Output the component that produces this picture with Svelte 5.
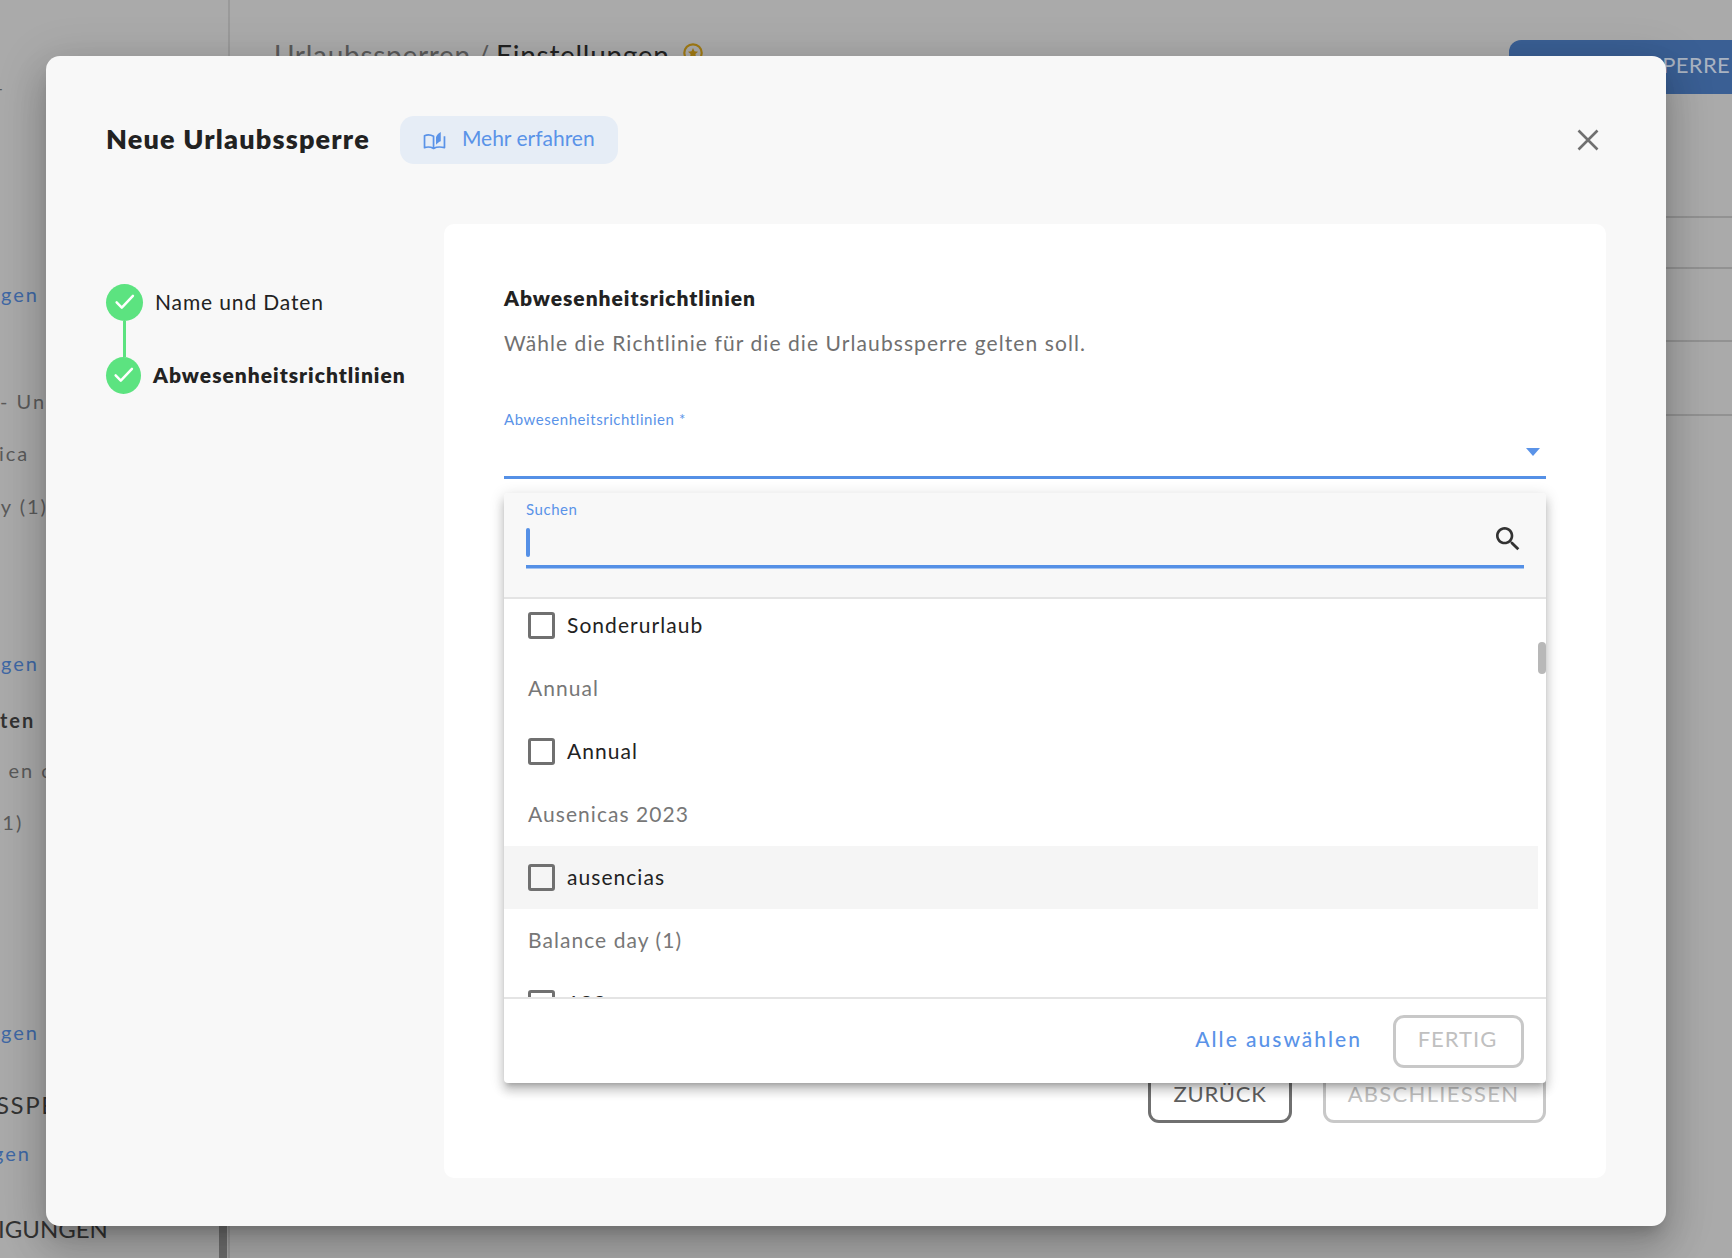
<script>
  const sideItems = [
    { text: '–', gap: 75, left: -8, kind: '' },
    { text: 'gen', gap: 183, left: 1, kind: 'link' },
    { text: '- Un', gap: 83, left: 0, kind: '' },
    { text: 'ica', gap: 28, left: -1, kind: '' },
    { text: 'ay (1)', gap: 29, left: -11, kind: '' },
    { text: 'gen', gap: 133, left: 1, kind: 'link' },
    { text: 'ten', gap: 33, left: 0, kind: 'bold' },
    { text: 'o en curso', gap: 26, left: -12, kind: '' },
    { text: '(1)', gap: 28, left: -5, kind: '' },
    { text: 'e', gap: 81, left: -12, kind: '' },
    { text: 'gen', gap: 81, left: 1, kind: 'link' },
    { text: 'SSPERREN', gap: 49, left: -4, kind: 'caps' },
    { text: 'gen', gap: 24, left: -7, kind: 'link' },
    { text: 'IGUNGEN', gap: 52, left: -2, kind: 'caps tight' }
  ];
  const rows = [
    { text: 'Sonderurlaub', check: true },
    { text: 'Annual', check: false },
    { text: 'Annual', check: true },
    { text: 'Ausenicas 2023', check: false },
    { text: 'ausencias', check: true, hover: true },
    { text: 'Balance day (1)', check: false },
    { text: '123', check: true }
  ];
  const steps = [
    { text: 'Name und Daten', active: false },
    { text: 'Abwesenheitsrichtlinien', active: true }
  ];
</script>

<div class="page">
  <aside class="side">
    {#each sideItems as item}
      <div class="side-item {item.kind}" style:margin-top="{item.gap}px" style:margin-left="{item.left}px">{item.text}</div>
    {/each}
    <div class="side-scroll"></div>
  </aside>

  <main class="main">
    <header class="top">
      <h1 class="crumb">Urlaubssperren / <span>Einstellungen</span></h1>
      <svg class="star" viewBox="0 0 24 24" aria-hidden="true">
        <circle cx="12" cy="12" r="9.500" fill="none" stroke="#a07a14" stroke-width="2.400" />
        <path d="M12 6.600l1.600 3.600 3.900.4-2.900 2.600.8 3.800-3.400-2-3.400 2 .8-3.800-2.900-2.600 3.900-.4z" fill="#a07a14" />
      </svg>
      <div class="new-btn">NEUE URLAUBSSPERRE</div>
    </header>
    <div class="bg-row r1"></div>
    <div class="bg-row r2"></div>
    <div class="bg-row r3"></div>
    <div class="bg-row r4"></div>
  </main>

  <div class="modal">
    <div class="modal-head">
      <h2 class="modal-title">Neue Urlaubssperre</h2>
      <div class="learn">
        <svg class="book" viewBox="0 0 24 20" aria-hidden="true">
          <path d="M1.500 5v12.500c3-1 6-1 9.500.8V5.600C8 3.800 4.500 3.500 1.500 5z" fill="none" stroke="currentColor" stroke-width="1.800" stroke-linejoin="round" />
          <path d="M11 18.300c3.500-1.800 7.500-1.800 11.500-.8V5.500" fill="none" stroke="currentColor" stroke-width="1.800" stroke-linejoin="round" />
          <path d="M13.600 14.500V6.200C14.600 4 16.400 2 18.600 1v9.800c-2 .7-3.700 2-5 3.700z" fill="currentColor" />
        </svg>
        <span>Mehr erfahren</span>
      </div>
      <svg class="close" viewBox="0 0 22 22" aria-hidden="true">
        <path d="M1.500 1.500l19 19M20.500 1.500l-19 19" fill="none" stroke="#707070" stroke-width="2.600" />
      </svg>
    </div>

    <div class="modal-body">
      <nav class="stepper">
        {#each steps as step, i}
          {#if i > 0}<div class="connector"></div>{/if}
          <div class="step" class:active={step.active}>
            <span class="dot">
              <svg viewBox="0 0 24 24" aria-hidden="true">
                <path d="M5 12.800l4.600 4.700L19.500 7" fill="none" stroke="#fff" stroke-width="2.200" stroke-linecap="round" stroke-linejoin="round" />
              </svg>
            </span>
            <span class="step-text">{step.text}</span>
          </div>
        {/each}
      </nav>

      <section class="card">
        <h3 class="card-title">Abwesenheitsrichtlinien</h3>
        <p class="card-sub">Wähle die Richtlinie für die die Urlaubssperre gelten soll.</p>
        <div class="field-label">Abwesenheitsrichtlinien *</div>
        <div class="select"><span class="arrow"></span></div>

        <div class="actions">
          <div class="btn back">ZURÜCK</div>
          <div class="btn off finish">ABSCHLIESSEN</div>
        </div>

        <div class="panel">
          <div class="panel-head">
            <div class="search-label">Suchen</div>
            <div class="search-input">
              <span class="caret"></span>
              <svg class="search" viewBox="0 0 24 24" aria-hidden="true">
                <path fill="#333" d="M15.500 14h-.79l-.28-.27C15.410 12.590 16 11.110 16 9.500 16 5.910 13.090 3 9.500 3S3 5.910 3 9.500 5.910 16 9.500 16c1.610 0 3.090-.59 4.230-1.570l.27.28v.79l5 4.990L20.490 19l-4.990-5zm-6 0C7.010 14 5 11.990 5 9.500S7.010 5 9.500 5 14 7.010 14 9.500 11.990 14 9.500 14z" />
              </svg>
            </div>
          </div>
          <div class="list">
            <div class="rows">
              {#each rows as row}
                {#if row.check}
                  <div class="row" class:hover={row.hover}><span class="box"></span><span class="row-text">{row.text}</span></div>
                {:else}
                  <div class="row group">{row.text}</div>
                {/if}
              {/each}
            </div>
            <div class="thumb"></div>
          </div>
          <div class="panel-foot">
            <span class="all">Alle auswählen</span>
            <div class="btn off done">FERTIG</div>
          </div>
        </div>
      </section>
    </div>
  </div>
</div>

<style>
  :global(body) {
    margin: 0;
    background: #aaa;
    font-family: "Lato", "Noto Sans", sans-serif;
  }
  h1, h2, h3, p { margin: 0; font-weight: inherit; font-size: inherit; }

  .page {
    position: relative;
    display: flex;
    width: 1732px;
    height: 1258px;
    overflow: hidden;
    background: #aaa;
    color: #222;
  }

  .side {
    position: relative;
    flex: none;
    box-sizing: border-box;
    width: 230px;
    overflow: hidden;
    border-right: 2px solid #9a9a9a;
  }
  .side-item {
    height: 24px;
    line-height: 24px;
    font-size: 20px;
    letter-spacing: 2px;
    white-space: nowrap;
    color: #5a5a5a;
  }
  .side-item.link { color: #3f68a5; }
  .side-item.bold { color: #333; font-weight: 700; }
  .side-item.caps { color: #333; font-size: 24px; letter-spacing: 1.600px; }
  .side-item.tight { letter-spacing: 0; }
  .side-scroll {
    position: absolute;
    right: 1px;
    bottom: 0;
    width: 8px;
    height: 60px;
    background: #6e6e6e;
  }

  .main { flex: 1; min-width: 0; }
  .top {
    display: flex;
    align-items: flex-start;
    height: 216px;
    box-sizing: border-box;
    padding: 40px 0 0 44px;
  }
  .crumb {
    font-size: 28px;
    line-height: 30px;
    color: #5a5a5a;
    letter-spacing: .7px;
    word-spacing: -2px;
  }
  .crumb span { color: #222; }
  .star { width: 22px; height: 22px; margin: 2px 0 0 12px; }
  .new-btn {
    margin-left: auto;
    width: 223px;
    height: 54px;
    box-sizing: border-box;
    padding: 0 2px 4px 0;
    border-radius: 12px 0 0 12px;
    background: #3a5f94;
    color: #aab4c2;
    font-size: 22px;
    line-height: 50px;
    letter-spacing: .3px;
    text-align: right;
    white-space: nowrap;
    direction: rtl;
    overflow: hidden;
  }
  .bg-row { border-top: 2px solid #929292; }
  .r1 { height: 49px; }
  .r2 { height: 71px; }
  .r3 { height: 72px; }

  .modal {
    position: absolute;
    left: 46px;
    top: 56px;
    width: 1620px;
    height: 1170px;
    display: flex;
    flex-direction: column;
    border-radius: 14px;
    background: #f8f8f8;
    box-shadow: 0 11px 15px -7px rgba(0,0,0,.2), 0 24px 38px 3px rgba(0,0,0,.14), 0 9px 46px 8px rgba(0,0,0,.12);
  }
  .modal-head {
    display: flex;
    align-items: center;
    height: 48px;
    margin-top: 60px;
    padding: 0 67px 0 60px;
  }
  .modal-title {
    padding-bottom: 3px;
    font-size: 27px;
    font-weight: 800;
    letter-spacing: 1.200px;
    color: #222;
    white-space: nowrap;
  }
  .learn {
    display: flex;
    align-items: center;
    gap: 16px;
    height: 48px;
    margin-left: 30px;
    padding: 0 23px;
    border-radius: 14px;
    background: #e6edf6;
    color: #5a93e8;
    font-size: 21px;
    white-space: nowrap;
  }
  .learn span { padding-bottom: 5px; }
  .book { width: 23px; height: 19px; }
  .close { width: 22px; height: 22px; margin-left: auto; }

  .modal-body {
    display: flex;
    flex: 1;
    min-height: 0;
    margin: 60px 60px 48px 60px;
  }
  .stepper {
    flex: none;
    width: 338px;
    padding-top: 60px;
    box-sizing: border-box;
  }
  .step { display: flex; align-items: center; gap: 12px; height: 37px; }
  .dot {
    display: flex;
    align-items: center;
    justify-content: center;
    flex: none;
    width: 37px;
    height: 37px;
    border-radius: 50%;
    background: #5ce380;
  }
  .dot svg { width: 27px; height: 27px; margin-top: -2px; }
  .step.active .dot { width: 35px; }
  .step-text {
    padding-bottom: 2px;
    font-size: 21px;
    letter-spacing: .87px;
    color: #222;
    white-space: nowrap;
  }
  .step.active .step-text { font-weight: 800; letter-spacing: 1px; }
  .connector { width: 3px; height: 36px; margin-left: 17px; background: #5ce380; }

  .card {
    position: relative;
    flex: 1;
    display: flex;
    flex-direction: column;
    box-sizing: border-box;
    padding: 60px 60px 55px;
    border-radius: 10px;
    background: #fff;
  }
  .card-title {
    font-size: 21px;
    line-height: 28px;
    font-weight: 800;
    letter-spacing: .97px;
    color: #222;
  }
  .card-sub {
    margin-top: 17px;
    font-size: 21px;
    line-height: 28px;
    letter-spacing: 1.080px;
    color: #707070;
  }
  .field-label {
    margin-top: 52px;
    font-size: 15px;
    line-height: 20px;
    color: #5a93e8;
    letter-spacing: .55px;
  }
  .select {
    display: flex;
    justify-content: flex-end;
    align-items: center;
    box-sizing: border-box;
    height: 50px;
    padding: 0 6px 2px 0;
    border-bottom: 3px solid #5590e6;
  }
  .arrow {
    width: 0;
    height: 0;
    border-left: 7px solid transparent;
    border-right: 7px solid transparent;
    border-top: 8px solid #5a93e8;
  }
  .actions {
    display: flex;
    justify-content: flex-end;
    gap: 31px;
    margin-top: auto;
  }
  .btn {
    display: flex;
    align-items: center;
    justify-content: center;
    box-sizing: border-box;
    height: 54px;
    padding-bottom: 5px;
    border: 3px solid #707070;
    border-radius: 11px;
    color: #606060;
    font-size: 22px;
    letter-spacing: 1.300px;
  }
  .btn.off { border-color: #c8c8c8; color: #c0c0c0; }
  .back { width: 144px; letter-spacing: .75px; }
  .finish { width: 223px; padding-right: 2px; }
  .done { width: 131px; height: 53px; padding-right: 2px; letter-spacing: 1px; }

  .panel {
    position: absolute;
    left: 60px;
    top: 269px;
    width: 1042px;
    height: 590px;
    display: flex;
    flex-direction: column;
    overflow: hidden;
    border-radius: 4px;
    background: #fff;
    box-shadow: 0 5px 5px -3px rgba(0,0,0,.2), 0 8px 10px 1px rgba(0,0,0,.14), 0 3px 14px 2px rgba(0,0,0,.12);
  }
  .panel-head {
    flex: none;
    box-sizing: border-box;
    height: 106px;
    padding: 6px 22px 0;
    background: #f8f8f8;
    border-bottom: 2px solid #e4e4e4;
  }
  .search-label {
    height: 20px;
    line-height: 20px;
    font-size: 15px;
    color: #5a93e8;
    letter-spacing: .55px;
  }
  .search-input {
    display: flex;
    align-items: flex-start;
    justify-content: space-between;
    box-sizing: border-box;
    height: 49px;
    padding-top: 9px;
    border-bottom: 3px solid #5590e6;
    box-shadow: 0 1px 0 #a4c4f2;
  }
  .caret { width: 4px; height: 29px; border-radius: 2px; background: #5590e6; }
  .search { width: 32px; height: 32px; margin-top: -5px; margin-right: 0; }

  .list { position: relative; flex: 1; min-height: 0; overflow: hidden; }
  .rows { margin-top: -5px; padding-right: 8px; }
  .row {
    display: flex;
    align-items: center;
    gap: 12px;
    height: 63px;
    box-sizing: border-box;
    padding-left: 24px;
    font-size: 21px;
    letter-spacing: 1.050px;
    color: #222;
  }
  .row-text { padding-bottom: 3px; }
  .row.group { padding-bottom: 2px; color: #777; }
  .row.hover { background: #f5f5f5; }
  .box {
    flex: none;
    box-sizing: border-box;
    width: 27px;
    height: 27px;
    border: 3px solid #707070;
    border-radius: 3px;
  }
  .thumb {
    position: absolute;
    right: 0;
    top: 43px;
    width: 8px;
    height: 32px;
    border-radius: 4px;
    background: #b8b8b8;
  }
  .panel-foot {
    flex: none;
    display: flex;
    align-items: center;
    justify-content: flex-end;
    gap: 31px;
    box-sizing: border-box;
    height: 86px;
    padding: 0 22px 0 0;
    border-top: 2px solid #e4e4e4;
  }
  .all {
    padding-bottom: 6px;
    font-size: 21px;
    letter-spacing: 2px;
    color: #5a93e8;
    font-weight: 500;
  }
</style>
